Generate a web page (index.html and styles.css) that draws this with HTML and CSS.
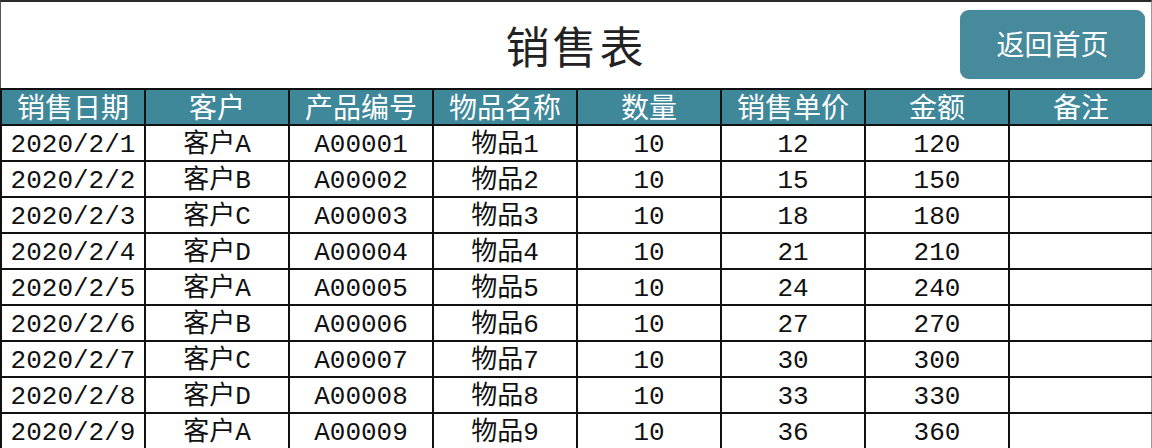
FILE: index.html
```html
<!DOCTYPE html>
<html lang="zh-CN">
<head>
<meta charset="utf-8">
<title>销售表</title>
<link rel="stylesheet" href="styles.css">
</head>
<body>
<div class="sheet">
  <div class="title-bar">
    <div class="spacer"></div>
    <h1 class="title">销售表</h1>
    <div class="actions"><button class="home-btn">返回首页</button></div>
  </div>
  <table class="grid">
    <colgroup>
      <col><col><col><col><col><col><col><col>
    </colgroup>
    <thead>
      <tr><th>销售日期</th><th>客户</th><th>产品编号</th><th>物品名称</th><th>数量</th><th>销售单价</th><th>金额</th><th>备注</th></tr>
    </thead>
    <tbody>
      <tr><td>2020/2/1</td><td>客户A</td><td>A00001</td><td>物品1</td><td>10</td><td>12</td><td>120</td><td></td></tr>
      <tr><td>2020/2/2</td><td>客户B</td><td>A00002</td><td>物品2</td><td>10</td><td>15</td><td>150</td><td></td></tr>
      <tr><td>2020/2/3</td><td>客户C</td><td>A00003</td><td>物品3</td><td>10</td><td>18</td><td>180</td><td></td></tr>
      <tr><td>2020/2/4</td><td>客户D</td><td>A00004</td><td>物品4</td><td>10</td><td>21</td><td>210</td><td></td></tr>
      <tr><td>2020/2/5</td><td>客户A</td><td>A00005</td><td>物品5</td><td>10</td><td>24</td><td>240</td><td></td></tr>
      <tr><td>2020/2/6</td><td>客户B</td><td>A00006</td><td>物品6</td><td>10</td><td>27</td><td>270</td><td></td></tr>
      <tr><td>2020/2/7</td><td>客户C</td><td>A00007</td><td>物品7</td><td>10</td><td>30</td><td>300</td><td></td></tr>
      <tr><td>2020/2/8</td><td>客户D</td><td>A00008</td><td>物品8</td><td>10</td><td>33</td><td>330</td><td></td></tr>
      <tr><td>2020/2/9</td><td>客户A</td><td>A00009</td><td>物品9</td><td>10</td><td>36</td><td>360</td><td></td></tr>
    </tbody>
  </table>
</div>
</body>
</html>
```
FILE: styles.css
```css
* { box-sizing: border-box; }
html, body { margin: 0; padding: 0; background: #fff; }
body { width: 1152px; height: 448px; overflow: hidden; }

.sheet {
  width: 1152px;
  border-top: 2px solid #2a2a2a;
  border-left: 1px solid #555;
  border-right: 1px solid #999;
}

.title-bar {
  height: 86px;
  display: grid;
  grid-template-columns: 1fr auto 1fr;
  align-items: center;
}

.title {
  margin: 0;
  font-family: "Noto Sans CJK SC", sans-serif;
  font-weight: 400;
  font-size: 44px;
  color: #222;
  letter-spacing: 3px;
  line-height: 1;
  padding-top: 0;
}

.actions {
  display: flex;
  justify-content: flex-end;
  align-self: start;
  padding-top: 8px;
  padding-right: 6px;
}

.home-btn {
  width: 185px;
  height: 69px;
  border: none;
  border-radius: 9px;
  background: #478a9b;
  color: #fff;
  font-family: "Noto Sans CJK SC", sans-serif;
  font-size: 28px;
  padding: 0 0 4px 0;
  box-shadow: 0 0 1px rgba(0,0,0,0.3);
}

.grid {
  width: 1151px;
  border-collapse: collapse;
  table-layout: fixed;
  margin-left: -1px;
  font-family: "Liberation Mono", "Noto Sans CJK SC", monospace;
  font-size: 26px;
}

.grid col { width: 144px; }

.grid th,
.grid td {
  border: 2px solid #111;
  height: 36px;
  padding: 0;
  text-align: center;
  white-space: nowrap;
}

.grid th {
  background: #3f889a;
  color: #fff;
  font-family: "Noto Sans CJK SC", sans-serif;
  font-weight: 400;
  font-size: 28px;
  line-height: 32px;
  padding-bottom: 2px;
}

.grid td {
  color: #111;
  line-height: 30px;
  padding-top: 4px;
}
```
